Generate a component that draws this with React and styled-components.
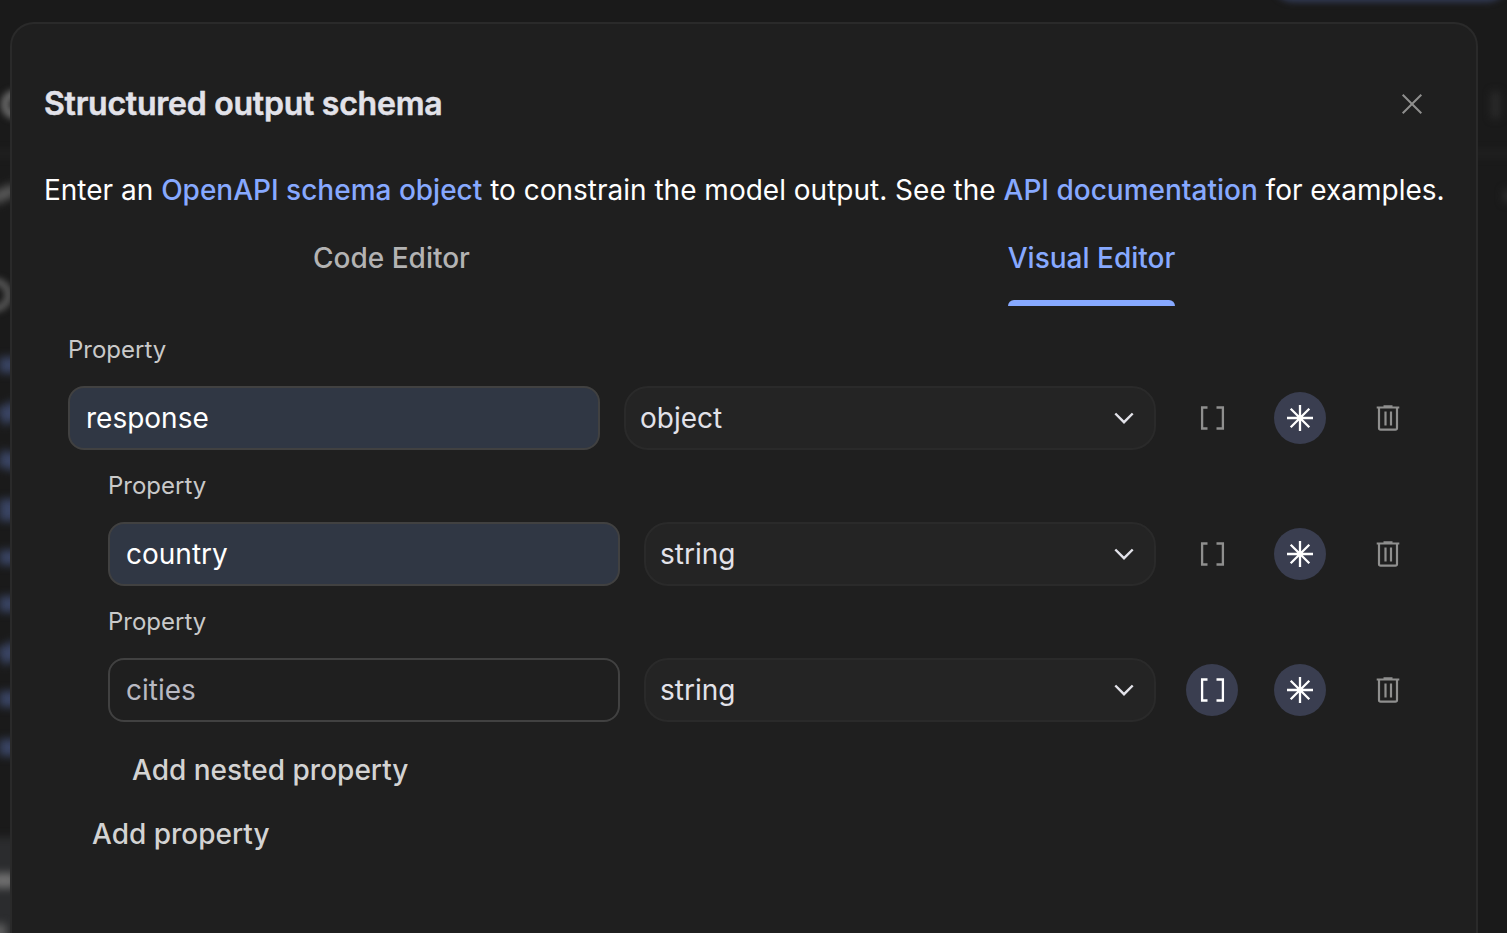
import React from 'react';
import styled, { createGlobalStyle, css } from 'styled-components';

const GlobalStyle = createGlobalStyle`
  *, *::before, *::after { box-sizing: border-box; }
  body { margin: 0; background: #1a1a1a; }
  button, input { font: inherit; letter-spacing: inherit; }
`;

const Screen = styled.div`
  position: relative;
  height: 933px;
  overflow: hidden;
  padding: 22px 29px 0 10px;
  background: #1a1a1a;
  color: #e2e2e9;
  font-family: Inter, "Liberation Sans", sans-serif;
  font-size: 28px;
`;

const Backdrop = styled.div`
  position: absolute;
  inset: 0;
  overflow: hidden;
`;

const Smudge = styled.div`
  position: absolute;
  left: ${(p) => p.$x}px;
  top: ${(p) => p.$y}px;
  width: ${(p) => p.$w}px;
  height: ${(p) => p.$h}px;
  border: ${(p) => (p.$ring ? `${p.$ring}px solid ${p.$color}` : 0)};
  border-radius: ${(p) => p.$r ?? 0}px;
  background: ${(p) => (p.$ring ? 'none' : p.$color)};
  filter: blur(${(p) => p.$blur ?? 4}px);
  transform: rotate(${(p) => p.$turn ?? 0}deg);
`;

const Dialog = styled.section`
  position: relative;
  height: 911px;
  padding: 48px 32px 0;
  border: 2px solid #2a2a2a;
  border-bottom: 0;
  border-radius: 24px 24px 0 0;
  background: #1f1f1f;
`;

const Header = styled.header`
  display: flex;
  align-items: center;
  justify-content: space-between;
  height: 64px;
`;

const Title = styled.h2`
  margin: 0;
  font-size: 32px;
  font-weight: 600;
  line-height: 40px;
  letter-spacing: -0.24px;
  -webkit-text-stroke: 0.5px currentColor;
`;

const CloseButton = styled.button`
  display: grid;
  place-items: center;
  width: 64px;
  height: 64px;
  padding: 0;
  border: 0;
  background: none;
  color: #8f8f8e;
`;

const Intro = styled.p`
  margin: 34px 0 0;
  line-height: 40px;
  color: #fff;
  white-space: nowrap;
`;

const Link = styled.a`
  color: #87a9ff;
  font-weight: 500;
  text-decoration: none;
`;

const Tabs = styled.nav`
  display: flex;
  height: 96px;
`;

const Tab = styled.button`
  display: flex;
  flex: 1;
  justify-content: center;
  padding: 0 5px 0 0;
  border: 0;
  background: none;
  color: ${(p) => (p.$active ? '#87a9ff' : '#b3b3b3')};
  font-weight: 500;
`;

const TabLabel = styled.span`
  display: flex;
  flex-direction: column;
  justify-content: space-between;
  height: 96px;
  padding-top: 28px;
  line-height: 40px;

  &::after {
    content: '';
    height: 6px;
    border-radius: 6px 6px 0 0;
    background: ${(p) => (p.$active ? '#87a9ff' : 'transparent')};
  }
`;

const Schema = styled.div`
  display: flex;
  flex-direction: column;
  gap: 20px;
  padding: 28px 24px 0;
`;

const Property = styled.div`
  display: flex;
  flex-direction: column;
  gap: 20px;
  padding-left: ${(p) => (p.$nested ? 40 : 0)}px;
`;

const Label = styled.label`
  font-size: 24px;
  line-height: 32px;
  color: #c9c9c9;
`;

const Controls = styled.div`
  display: flex;
  align-items: center;
  gap: 24px;
`;

const NameInput = styled.input`
  flex: 1 1 0;
  min-width: 0;
  height: 64px;
  padding: 0 16px;
  border: 2px solid #414141;
  border-radius: 16px;
  outline: 0;
  background: ${(p) => (p.$filled ? '#303744' : 'transparent')};
  color: ${(p) => (p.$filled ? '#fff' : '#b9b9c2')};
`;

const Select = styled.div`
  display: flex;
  flex: 1 1 0;
  align-items: center;
  justify-content: space-between;
  height: 64px;
  padding: 0 18px 0 14px;
  border: 2px solid #2a2a2a;
  border-radius: 24px;
  background: #242424;
`;

const ActionGroup = styled.div`
  display: flex;
  gap: 24px;
`;

const IconButton = styled.button`
  display: grid;
  place-items: center;
  width: 52px;
  height: 52px;
  margin: 0 6px;
  padding: 0;
  border: 0;
  border-radius: 50%;
  background: none;
  color: #8f8f8e;
  ${(p) => p.$on && css`
    background: #3a3e50;
    color: #fff;
  `}
`;

const Actions = styled.div`
  display: flex;
  flex-direction: column;
  align-items: flex-start;
  padding: 16px 24px 0;
`;

const AddButton = styled.button`
  height: 64px;
  padding: 0 24px;
  margin-left: ${(p) => (p.$nested ? 40 : 0)}px;
  border: 0;
  background: none;
  color: #d3d3d3;
  font-weight: 500;
`;

const Icon = styled.svg.attrs({ fill: 'none', stroke: 'currentColor' })`
  display: block;
  width: ${(p) => p.$s}px;
  height: ${(p) => p.$s}px;
`;

const CloseIcon = () => (
  <Icon $s={24} viewBox="0 0 24 24" strokeWidth="2">
    <path d="M2.700 2.700 21.300 21.300M21.300 2.700 2.700 21.300" />
  </Icon>
);

const ChevronIcon = () => (
  <Icon $s={24} viewBox="0 0 24 24" strokeWidth="2.4">
    <path d="M3.300 7.500 12 16.200l8.700-8.700" />
  </Icon>
);

const ArrayIcon = () => (
  <Icon $s={28} viewBox="0 0 28 28" strokeWidth="2.3">
    <path d="M9.500 3.500H4.100V24.500H9.500M18.500 3.500H24.900V24.500H18.500" />
  </Icon>
);

const RequiredIcon = () => (
  <Icon $s={28} viewBox="0 0 28 28" strokeWidth="2.3">
    <path d="M14 1V27M1 14H27M4.700 4.700 23.300 23.300M23.300 4.700 4.700 23.300" />
  </Icon>
);

const TrashIcon = () => (
  <Icon $s={28} viewBox="0 0 28 28" strokeWidth="2.200">
    <path d="M2.700 3.500H25.300M9.500 2.300H18.500M5 3.500V24Q5 25.700 6.700 25.700H21.300Q23 25.700 23 24V3.500M11.500 7.500V21.500M17 7.500V21.500" />
  </Icon>
);

function PropertyRow({ name, type, filled, array, nested }) {
  return (
    <Property $nested={nested}>
      <Label>Property</Label>
      <Controls>
        <NameInput $filled={filled} defaultValue={name} aria-label="Property name" />
        <Select>
          <span>{type}</span>
          <ChevronIcon />
        </Select>
        <ActionGroup>
          <IconButton $on={array} aria-label="Array"><ArrayIcon /></IconButton>
          <IconButton $on aria-label="Required"><RequiredIcon /></IconButton>
          <IconButton aria-label="Delete"><TrashIcon /></IconButton>
        </ActionGroup>
      </Controls>
    </Property>
  );
}

const codeLines = [
  { y: 365, h: 16 },
  { y: 413, h: 18, turn: -25 },
  { y: 460, h: 17, turn: 15 },
  { y: 510, h: 22 },
  { y: 557, h: 15 },
  { y: 604, h: 16 },
  { y: 653, h: 18, turn: -25 },
  { y: 699, h: 16 },
  { y: 747, h: 17 },
];

export default function App() {
  return (
    <Screen>
      <GlobalStyle />
      <Backdrop aria-hidden="true">
        <Smudge $x={1270} $y={-46} $w={240} $h={48} $r={24} $blur={3} $color="#333c58" />
        <Smudge $x={1492} $y={92} $w={7} $h={26} $color="#303030" />
        <Smudge $x={-20} $y={151} $w={1560} $h={5} $color="#242424" />
        <Smudge $x={1504} $y={190} $w={10} $h={12} $color="#303030" />
        <Smudge $x={-30} $y={837} $w={50} $h={130} $color="#2b2c2e" />
        <Smudge $x={1} $y={90} $w={30} $h={29} $r={14} $ring={8} $blur={3} $color="#686868" />
        <Smudge $x={-8} $y={188} $w={24} $h={12} $turn={-25} $color="#5a5a5a" />
        <Smudge $x={-22} $y={278} $w={34} $h={34} $r={17} $ring={7} $blur={3} $color="#585858" />
        {codeLines.map(({ y, h, turn }) => (
          <Smudge key={y} $x={-1} $y={y - h / 2} $w={20} $h={h} $turn={turn} $color="#394463" />
        ))}
        <Smudge $x={-8} $y={873} $w={24} $h={15} $color="#707070" />
        <Smudge $x={-8} $y={924} $w={14} $h={18} $color="#606060" />
      </Backdrop>
      <Dialog>
        <Header>
          <Title>Structured output schema</Title>
          <CloseButton aria-label="Close"><CloseIcon /></CloseButton>
        </Header>
        <Intro>
          Enter an <Link>OpenAPI schema object</Link> to constrain the model output. See the{' '}
          <Link>API documentation</Link> for examples.
        </Intro>
        <Tabs>
          <Tab><TabLabel>Code Editor</TabLabel></Tab>
          <Tab $active><TabLabel $active>Visual Editor</TabLabel></Tab>
        </Tabs>
        <Schema>
          <PropertyRow name="response" type="object" filled />
          <PropertyRow name="country" type="string" filled nested />
          <PropertyRow name="cities" type="string" array nested />
        </Schema>
        <Actions>
          <AddButton $nested>Add nested property</AddButton>
          <AddButton>Add property</AddButton>
        </Actions>
      </Dialog>
    </Screen>
  );
}
